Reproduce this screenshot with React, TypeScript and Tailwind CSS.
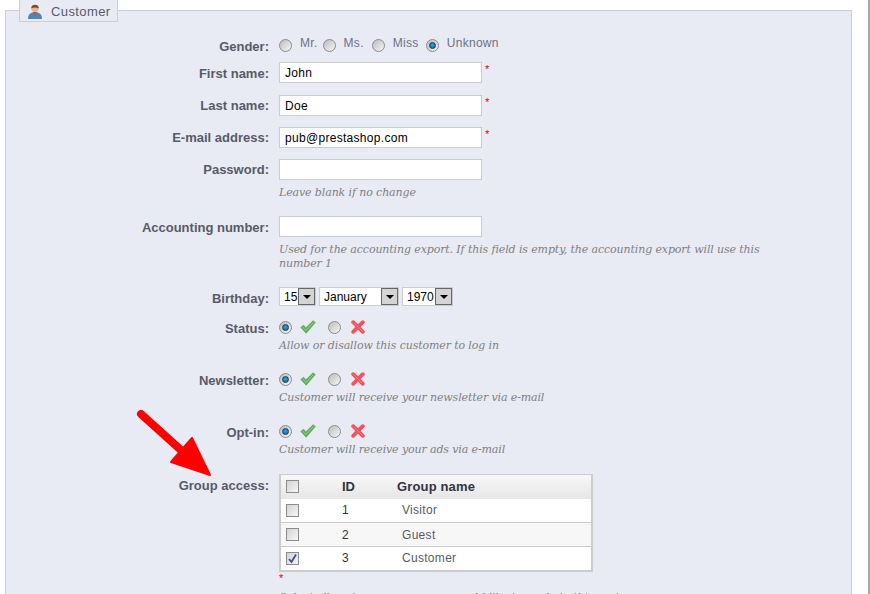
import type { ReactNode } from "react";

function Radio({ on = false }: { on?: boolean }) {
  return (
    <span className="flex h-[13px] w-[13px] shrink-0 items-center justify-center rounded-full border border-[#8a8a8a] bg-gradient-to-br from-[#bdbdbd] to-[#f6f6f6]">
      {on && <span className="h-[7px] w-[7px] rounded-full border border-[#0d3f66] bg-[radial-gradient(circle_at_50%_40%,#3aa6e4,#0b5a94)]" />}
    </span>
  );
}

function Check({ on = false }: { on?: boolean }) {
  return (
    <span className="flex h-[13px] w-[13px] shrink-0 items-center justify-center border border-[#8c8c8c] bg-gradient-to-br from-[#d2d2d2] to-[#f6f6f6]">
      {on && (
        <svg width="11" height="11" viewBox="0 0 11 11">
          <path d="M2 6l2.500 3L9 1.500" fill="none" stroke="#3c4f9e" strokeWidth="1.800" />
        </svg>
      )}
    </span>
  );
}

function Tick() {
  return (
    <svg width="16" height="14" viewBox="0 0 16 14">
      <path d="M.8 7.500l2.700-2.300 2.500 2.500L13 .8l2.300 1.700L6.200 13.200z" fill="#62b35f" stroke="#4f9a50" strokeWidth="0.600" />
      <path d="M2.500 7l3.500 3.400L13.300 2.600" fill="none" stroke="#8fd08a" strokeWidth="0.800" />
    </svg>
  );
}

function Cross() {
  return (
    <svg width="14" height="14" viewBox="0 0 14 14">
      <path d="M2.200 2.200l9.600 9.600M11.800 2.200l-9.600 9.600" stroke="#f4525f" strokeWidth="3.800" strokeLinecap="round" />
      <path d="M2.500 2.500l9 9" stroke="#ff8a90" strokeWidth="0.800" />
    </svg>
  );
}

function Row({ label, mt, pt = "pt-[2px]", children }: { label: string; mt: string; pt?: string; children: ReactNode }) {
  return (
    <div className={`flex ${mt}`}>
      <div className={`w-[263px] shrink-0 ${pt} text-right text-[13px] leading-[20px] font-bold text-[#585a69]`}>{label}:</div>
      <div className="ml-[10px] min-w-0 flex-1">{children}</div>
    </div>
  );
}

function TextInput({ value = "", req = false }: { value?: string; req?: boolean }) {
  return (
    <div className="flex">
      <div className="h-[21px] w-[203px] border border-[#cccccc] bg-white px-[5px] text-[12px] leading-[20px] tracking-[0.3px] text-black">{value}</div>
      {req && <span className="ml-[3px] text-[11px] leading-[14px] text-[#e00000]">*</span>}
    </div>
  );
}

function Select({ value, w }: { value: string; w: string }) {
  return (
    <div className={`flex h-[19px] ${w} items-center justify-between border border-[#cccccc] bg-white pl-[4px] text-[12px] text-black`}>
      <span>{value}</span>
      <span className="flex h-[17px] w-[17px] shrink-0 items-center justify-center border border-[#666666] bg-[#d4d4d4]">
        <span className="h-0 w-0 border-x-[4px] border-t-[4px] border-x-transparent border-t-black" />
      </span>
    </div>
  );
}

function Help({ children }: { children: ReactNode }) {
  return <p className="w-[490px] font-['DejaVu_Serif'] text-[11px] leading-[14px] tracking-[-0.12px] text-[#7f7f7f] italic">{children}</p>;
}

function YesNo() {
  return (
    <div className="mt-[2px] mb-[1px] flex h-[16px] items-center">
      <Radio on />
      <span className="ml-[8px]"><Tick /></span>
      <span className="ml-[12px]"><Radio /></span>
      <span className="ml-[10px]"><Cross /></span>
    </div>
  );
}

function GroupRow({ id, name, on, shade }: { id: number; name: string; on?: boolean; shade?: boolean }) {
  return (
    <tr className={`h-[24px] border-b border-[#cccccc] last:border-b-0 ${shade ? "bg-[#f7f7f7]" : "bg-white"}`}>
      <td className="w-[56px] pl-[5px]"><Check on={on} /></td>
      <td className="w-[61px] pl-[6px] text-[#333344]">{id}</td>
      <td className="pl-[5px] tracking-[0.3px] text-[#585a69]">{name}</td>
    </tr>
  );
}

export default function App() {
  return (
    <div className="relative h-[594px] w-[870px] overflow-hidden border-r-2 border-[#a8a8a8] bg-white font-['Liberation_Sans',sans-serif]">
      <div className="pt-[10px] pl-[5px]">
        <div className="relative h-[600px] w-[847px] border border-[#ccced7] bg-[#e9ebf4]">
          <div className="absolute top-[-12px] left-[13px] flex h-[23px] w-[99px] items-center border border-[#ccced7] bg-[#e9ebf4] pt-[2px] pl-[7px] text-[13px] tracking-[0.4px] text-[#585a69]">
            <svg width="16" height="16" viewBox="0 0 16 16">
              <circle cx="8" cy="4.500" r="3.500" fill="#e8b48c" />
              <path d="M4.300 4.500c-.5-5 7.900-5 7.400 0-2-1.200-5.400-1.200-7.400 0z" fill="#7a4a24" />
              <path d="M1 15c0-5 3-7 7-7s7 2 7 7z" fill="#4f86b8" />
              <path d="M7 8h2l-.4 4h-1.200z" fill="#c9502e" />
            </svg>
            <span className="ml-[8px]">Customer</span>
          </div>

          <Row label="Gender" mt="mt-[24px]">
            <div className="flex h-[20px] items-center text-[12px] tracking-[0.3px] text-[#6d7088]">
              <Radio /><span className="mb-[4px] ml-[8px]">Mr.</span>
              <span className="ml-[5px]"><Radio /></span><span className="mb-[4px] ml-[8px]">Ms.</span>
              <span className="ml-[8px]"><Radio /></span><span className="mb-[4px] ml-[8px]">Miss</span>
              <span className="ml-[7px]"><Radio on /></span><span className="mb-[4px] ml-[8px]">Unknown</span>
            </div>
          </Row>
          <Row label="First name" mt="mt-[5px]"><TextInput value="John" req /></Row>
          <Row label="Last name" mt="mt-[11px]" pt="pt-[1px]"><TextInput value="Doe" req /></Row>
          <Row label="E-mail address" mt="mt-[11px]" pt="pt-[1px]"><TextInput value="pub@prestashop.com" req /></Row>
          <Row label="Password" mt="mt-[11px]" pt="pt-[1px]">
            <TextInput />
            <div className="mt-[6px]"><Help>Leave blank if no change</Help></div>
          </Row>
          <Row label="Accounting number" mt="mt-[16px]">
            <TextInput />
            <div className="mt-[6px]">
              <Help>Used for the accounting export. If this field is empty, the accounting export will use this number 1</Help>
            </div>
          </Row>
          <Row label="Birthday" mt="mt-[16px]">
            <div className="flex gap-[3px]">
              <Select value="15" w="w-[37px]" />
              <Select value="January" w="w-[80px]" />
              <Select value="1970" w="w-[51px]" />
            </div>
          </Row>
          <Row label="Status" mt="mt-[8px]">
            <YesNo />
            <div className="mt-[4px]"><Help>Allow or disallow this customer to log in</Help></div>
          </Row>
          <Row label="Newsletter" mt="mt-[16px]">
            <YesNo />
            <div className="mt-[4px]"><Help>Customer will receive your newsletter via e-mail</Help></div>
          </Row>
          <Row label="Opt-in" mt="mt-[16px]">
            <YesNo />
            <div className="mt-[4px]"><Help>Customer will receive your ads via e-mail</Help></div>
          </Row>
          <Row label="Group access" mt="mt-[17px]">
            <table className="w-[314px] border-2 border-t border-[#cccccc] text-[12px]">
              <thead>
                <tr className="h-[24px] bg-gradient-to-b from-[#f8f8f8] to-[#e6e6e6] text-left text-[13px] text-[#333344]">
                  <th className="w-[56px] pl-[5px]"><Check /></th>
                  <th className="w-[61px] pl-[6px]">ID</th>
                  <th className="tracking-[0.15px]">Group name</th>
                </tr>
              </thead>
              <tbody>
                <GroupRow id={1} name="Visitor" />
                <GroupRow id={2} name="Guest" shade />
                <GroupRow id={3} name="Customer" on />
              </tbody>
            </table>
            <div className="text-[11px] leading-[13px] text-[#e00000]">*</div>
            <div className="mt-[6px]"><Help>Select all customer groups you would like to apply to this customer</Help></div>
          </Row>
        </div>
      </div>

      <svg className="absolute top-[405px] left-[130px]" width="90" height="80" viewBox="130 405 90 80">
        <path d="M141 414L182 451" stroke="#ff0000" strokeWidth="8" strokeLinecap="round" />
        <path d="M192 438L210 475L171 462z" fill="#ff0000" stroke="#ff0000" strokeWidth="2" strokeLinejoin="round" />
      </svg>
    </div>
  );
}
